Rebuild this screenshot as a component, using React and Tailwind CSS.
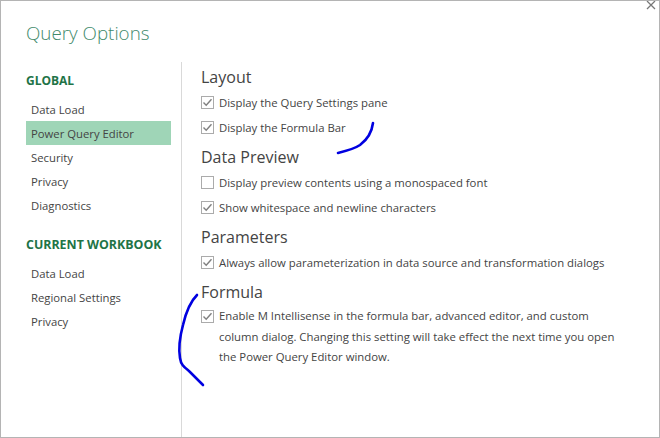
const globalItems = ["Data Load", "Power Query Editor", "Security", "Privacy", "Diagnostics"];
const workbookItems = ["Data Load", "Regional Settings", "Privacy"];

const NavList = ({ items, active }) => (
  <ul>
    {items.map((item) => (
      <li
        key={item}
        className={`h-6 pl-[5px] text-[11.3px] leading-[26px] text-[#444] ${item === active ? "bg-[#9fd5b7]" : ""}`}
      >
        {item}
      </li>
    ))}
  </ul>
);

const Check = ({ checked }) => (
  <span className="flex h-[13px] w-[13px] shrink-0 items-center justify-center border border-[#ababab] bg-white">
    {checked && (
      <svg width="11" height="11" viewBox="0 0 11 11" fill="none">
        <path d="M1.5 5.5 L4.2 8.2 L9.5 2.2" stroke="#808080" strokeWidth="1.4" />
      </svg>
    )}
  </span>
);

const Option = ({ checked = true, children, className = "" }) => (
  <div className={`flex h-[25px] items-center gap-[5px] text-[11.35px] text-[#444] ${className}`}>
    <Check checked={checked} />
    <span>{children}</span>
  </div>
);

const Heading = ({ children, className = "" }) => (
  <h2 className={`h-[24px] text-[16px] leading-[24px] text-[#444] ${className}`}>{children}</h2>
);

export default function App() {
  return (
    <div
      className="relative flex h-[438px] w-[660px] flex-col overflow-hidden border border-[#b4b4b4] bg-white"
      style={{ fontFamily: '"Open Sans", "Noto Sans", sans-serif' }}
    >
      <svg className="absolute right-[1px] top-0" width="12" height="10" viewBox="0 0 12 10" fill="none">
        <path d="M1 0 L9 8 M9 0 L1 8" stroke="#777" strokeWidth="1.3" />
      </svg>

      <h1 className="h-[61px] pl-[25px] pt-[17px] text-[18.8px] font-light leading-[30px] text-[#3f8a6c]">
        Query Options
      </h1>

      <div className="flex min-h-0 flex-1">
        <aside className="w-[180px] shrink-0 pl-[25px] pr-[10px]">
          <h3 className="h-[24px] pt-[7px] text-[12px] font-bold leading-[24px] text-[#217346]">GLOBAL</h3>
          <div className="mt-[11px]">
            <NavList items={globalItems} active="Power Query Editor" />
          </div>
          <h3 className="mt-[16px] h-[24px] text-[12.4px] font-bold leading-[24px] text-[#217346]">
            CURRENT WORKBOOK
          </h3>
          <div className="mt-[4px]">
            <NavList items={workbookItems} />
          </div>
        </aside>

        <main className="flex-1 border-l border-[#d9d9d9] pl-[19px] pr-[32px]">
          <Heading className="mt-[3px]">Layout</Heading>
          <Option className="mt-[1px]">Display the Query Settings pane</Option>
          <Option>Display the Formula Bar</Option>
          <Heading className="mt-[5px]">Data Preview</Heading>
          <Option className="mt-[1px]" checked={false}>
            Display preview contents using a monospaced font
          </Option>
          <Option>Show whitespace and newline characters</Option>
          <Heading className="mt-[5px]">Parameters</Heading>
          <Option className="mt-[1px]">
            Always allow parameterization in data source and transformation dialogs
          </Option>
          <Heading className="mt-[5px]">Formula</Heading>
          <div className="mt-[2px] flex gap-[5px] text-[11.35px] leading-[20.5px] text-[#444]">
            <span className="mt-[4px]">
              <Check checked />
            </span>
            <p>
              Enable M Intellisense in the formula bar, advanced editor, and custom column dialog. Changing this
              setting will take effect the next time you open the Power Query Editor window.
            </p>
          </div>
        </main>
      </div>

      {/* hand-drawn pen marks on top of the dialog */}
      <svg className="pointer-events-none absolute left-[-1px] top-[-1px]" width="660" height="438" fill="none">
        <path d="M373 123 C372 131 368 139 360 145 C354 149 346 151 338 153" stroke="#0000e0" strokeWidth="2.6" strokeLinecap="round" />
        <path
          d="M197 295 C190 302 186 312 183 325 C180 336 178 346 180 358 C181 365 184 367 189 371 C194 376 199 381 203 385"
          stroke="#0000e0"
          strokeWidth="2.6"
          strokeLinecap="round"
        />
      </svg>
    </div>
  );
}
